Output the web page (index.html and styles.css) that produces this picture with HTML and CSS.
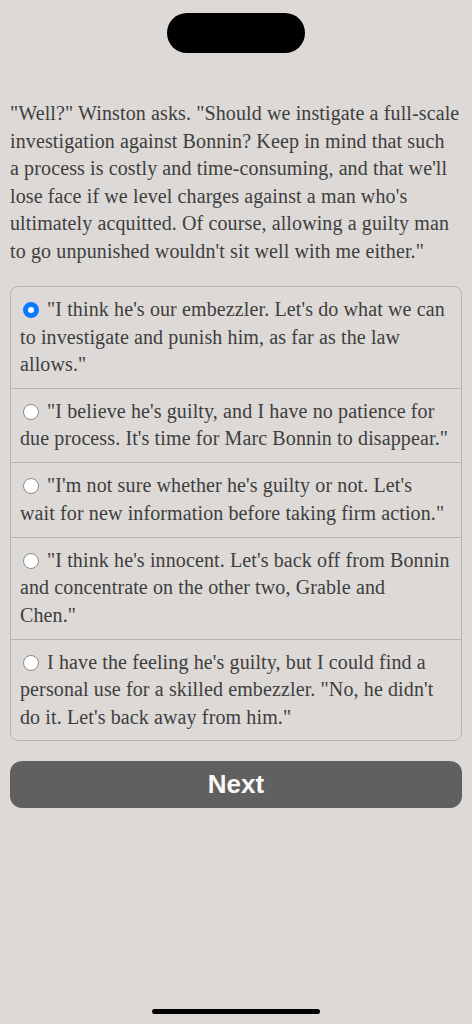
FILE: index.html
```html
<!DOCTYPE html>
<html>
<head>
<meta charset="utf-8">
<link rel="stylesheet" href="styles.css">
</head>
<body>
<div class="screen">
  <div class="notch"></div>
  <main class="content">
    <p class="passage">"Well?" Winston asks. "Should we instigate a full-scale<br>investigation against Bonnin? Keep in mind that such<br>a process is costly and time-consuming, and that we'll<br>lose face if we level charges against a man who's<br>ultimately acquitted. Of course, allowing a guilty man<br>to go unpunished wouldn't sit well with me either."</p>
    <div class="choices">
      <label class="choice"><span class="radio checked"></span>"I think he's our embezzler. Let's do what we can<br>to investigate and punish him, as far as the law<br>allows."</label>
      <label class="choice"><span class="radio"></span>"I believe he's guilty, and I have no patience for<br>due process. It's time for Marc Bonnin to disappear."</label>
      <label class="choice"><span class="radio"></span>"I'm not sure whether he's guilty or not. Let's<br>wait for new information before taking firm action."</label>
      <label class="choice"><span class="radio"></span>"I think he's innocent. Let's back off from Bonnin<br>and concentrate on the other two, Grable and<br>Chen."</label>
      <label class="choice"><span class="radio"></span>I have the feeling he's guilty, but I could find a<br>personal use for a skilled embezzler. "No, he didn't<br>do it. Let's back away from him."</label>
    </div>
    <button class="next">Next</button>
  </main>
  <div class="home"></div>
</div>
</body>
</html>
```

FILE: styles.css
```css
html, body {
  margin: 0;
  padding: 0;
  background: #dcd9d6;
}
.screen {
  position: relative;
  width: 472px;
  height: 1024px;
  overflow: hidden;
  background: #dcd9d6;
}
.notch {
  position: absolute;
  left: 167px;
  top: 13px;
  width: 138px;
  height: 40px;
  border-radius: 20px;
  background: #000;
}
.home {
  position: absolute;
  left: 152px;
  top: 1009px;
  width: 168px;
  height: 5px;
  border-radius: 3px;
  background: #000;
}
.content {
  padding: 100px 10px 0 10px;
  font-family: "Liberation Serif", serif;
  font-size: 20px;
  letter-spacing: 0.12px;
  line-height: 27.5px;
  color: #3e3e3e;
}
.passage {
  margin: 0 0 21px 0;
}
.choices {
  border: 1px solid #b4b4b4;
  border-radius: 8px;
  overflow: hidden;
}
.choice {
  display: block;
  padding: 9px 6px 9.4px 9px;
}
.choice + .choice {
  border-top: 1px solid #b4b4b4;
}
.radio {
  display: inline-block;
  box-sizing: border-box;
  width: 16px;
  height: 16px;
  border-radius: 50%;
  background: #fff;
  border: 1px solid #8a8a8a;
  margin: 0 8px 0 3px;
  vertical-align: -2px;
}
.radio.checked {
  border: 5px solid #0a7aff;
}
.next {
  display: block;
  width: 100%;
  height: 47px;
  margin-top: 20px;
  border: none;
  border-radius: 12px;
  background: #616060;
  color: #faf8f5;
  font-family: "Liberation Sans", Arial, sans-serif;
  font-weight: bold;
  font-size: 26px;
  letter-spacing: 0;
  padding: 0;
}
```
